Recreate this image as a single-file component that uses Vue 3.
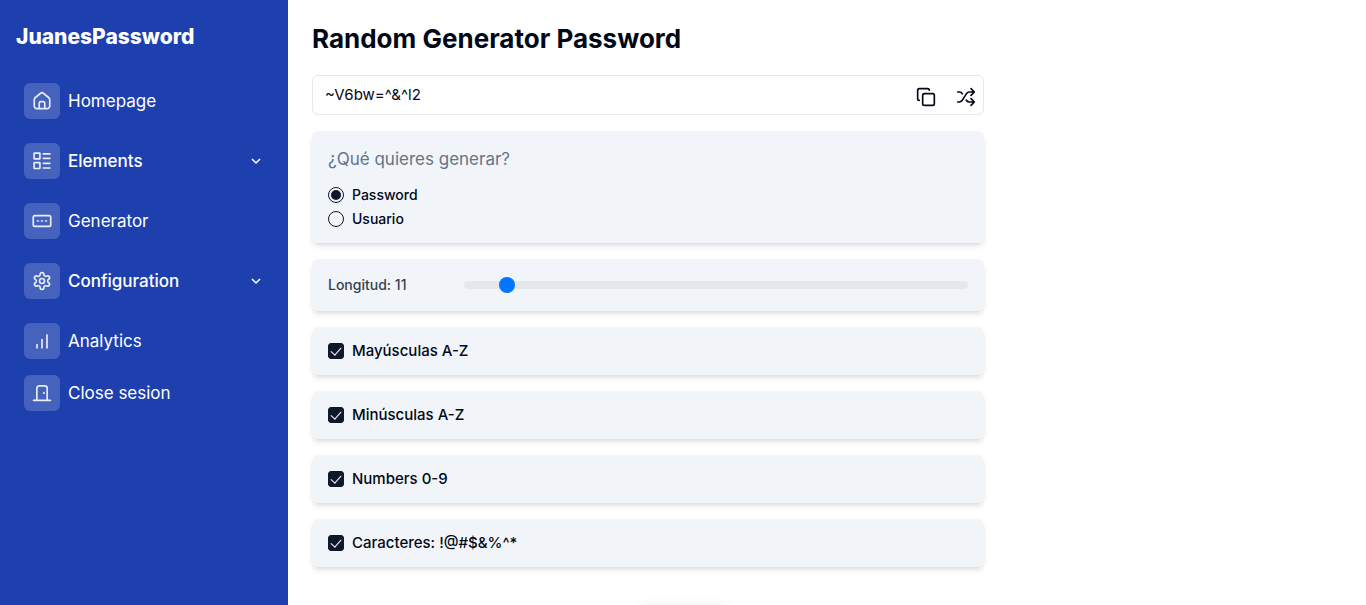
<script setup>
import { ref } from 'vue'

const password = ref('~V6bw=^&^l2')
const kind = ref('password')
const length = ref(11)

const links = [
  { label: 'Homepage', icon: 'home' },
  { label: 'Elements', icon: 'list', group: true },
  { label: 'Generator', icon: 'input' },
  { label: 'Configuration', icon: 'gear', group: true },
  { label: 'Analytics', icon: 'bars' },
  { label: 'Close sesion', icon: 'door', tight: true },
]

const options = ref([
  { id: 'upper', label: 'Mayúsculas A-Z', on: true },
  { id: 'lower', label: 'Minúsculas A-Z', on: true },
  { id: 'digits', label: 'Numbers 0-9', on: true },
  { id: 'symbols', label: 'Caracteres: !@#$&%^*', on: true },
])
</script>

<template>
  <div class="layout">
    <aside class="sidebar">
      <div class="brand">JuanesPassword</div>
      <nav class="nav">
        <component
          :is="link.group ? 'button' : 'a'"
          v-for="link in links"
          :key="link.label"
          :href="link.group ? undefined : '#'"
          :type="link.group ? 'button' : undefined"
          class="link"
          :class="{ group: link.group, tight: link.tight }"
        >
          <span class="tile">
            <svg class="icon" viewBox="0 0 24 24" aria-hidden="true">
              <template v-if="link.icon === 'home'">
                <path d="M10.4 2.7 4.1 7.8a3.7 3.7 0 0 0-1.4 2.9V18A3.2 3.2 0 0 0 6 21.2h12a3.2 3.2 0 0 0 3.3-3.2v-7.3a3.7 3.7 0 0 0-1.4-2.9L13.6 2.7a2.6 2.6 0 0 0-3.2 0z" />
                <path d="M8.7 21v-6.4a1.8 1.8 0 0 1 1.8-1.800h3a1.800 1.800 0 0 1 1.800 1.800V21" />
              </template>
              <template v-else-if="link.icon === 'list'">
                <rect x="2.500" y="2.500" width="7" height="7" rx="0.500" />
                <rect x="2.500" y="14" width="7" height="7" rx="0.500" />
                <path d="M13.500 3.500h8M13.500 8.800h8M13.500 14.800h8M13.500 20.400h8" />
              </template>
              <template v-else-if="link.icon === 'input'">
                <rect x="1.500" y="5.500" width="21" height="13" rx="2" />
                <path d="M6.600 12h1M11.500 12h1M16.400 12h1" />
              </template>
              <template v-else-if="link.icon === 'gear'">
                <path d="M12.220 2h-.44a2 2 0 0 0-2 2v.18a2 2 0 0 1-1 1.730l-.43.25a2 2 0 0 1-2 0l-.15-.08a2 2 0 0 0-2.730.73l-.22.38a2 2 0 0 0 .73 2.730l.15.1a2 2 0 0 1 1 1.720v.51a2 2 0 0 1-1 1.740l-.15.09a2 2 0 0 0-.73 2.730l.22.38a2 2 0 0 0 2.730.73l.15-.08a2 2 0 0 1 2 0l.43.25a2 2 0 0 1 1 1.730V20a2 2 0 0 0 2 2h.44a2 2 0 0 0 2-2v-.18a2 2 0 0 1 1-1.730l.43-.25a2 2 0 0 1 2 0l.15.08a2 2 0 0 0 2.730-.73l.22-.39a2 2 0 0 0-.73-2.730l-.15-.08a2 2 0 0 1-1-1.740v-.5a2 2 0 0 1 1-1.740l.15-.09a2 2 0 0 0 .73-2.730l-.22-.38a2 2 0 0 0-2.730-.73l-.15.08a2 2 0 0 1-2 0l-.43-.25a2 2 0 0 1-1-1.730V4a2 2 0 0 0-2-2z" />
                <circle cx="12" cy="12" r="3" />
              </template>
              <template v-else-if="link.icon === 'bars'">
                <path class="thick" d="M6 15.500V21M12 9.500V21M18 4v17" />
              </template>
              <template v-else>
                <path d="M1.800 20.800h20.400M5.800 20.800V6.500a3 3 0 0 1 3-3h6.400a3 3 0 0 1 3 3v14.300M14.300 11.600v1" />
              </template>
            </svg>
          </span>
          <span class="text">{{ link.label }}</span>
          <svg v-if="link.group" class="chevron" viewBox="0 0 16 16" aria-hidden="true">
            <path d="m4 6 4 4 4-4" />
          </svg>
        </component>
      </nav>
    </aside>

    <main class="main">
      <form class="panel" @submit.prevent>
        <h1 class="title">Random Generator Password</h1>

        <div class="output">
          <input v-model="password" class="value" type="text" aria-label="Password generado" />
          <button type="button" class="action" aria-label="Copiar">
            <svg class="glyph" viewBox="0 0 24 24" aria-hidden="true">
              <rect x="8" y="8" width="14" height="14" rx="2" />
              <path d="M4 16c-1.100 0-2-.9-2-2V4c0-1.100.9-2 2-2h10c1.100 0 2 .9 2 2" />
            </svg>
          </button>
          <button type="button" class="action" aria-label="Generar de nuevo">
            <svg class="glyph" viewBox="0 0 24 24" aria-hidden="true">
              <path d="m18 14 4 4-4 4M18 2l4 4-4 4M2 18h1.973a4 4 0 0 0 3.300-1.700l5.454-8.600a4 4 0 0 1 3.300-1.700H22M2 6h1.972a4 4 0 0 1 3.600 2.200M22 18h-6.041a4 4 0 0 1-3.300-1.800l-.359-.45" />
            </svg>
          </button>
        </div>

        <fieldset class="card kinds">
          <div class="question">¿Qué quieres generar?</div>
          <label class="choice small">
            <input v-model="kind" class="radio" type="radio" name="kind" value="password" />
            <span>Password</span>
          </label>
          <label class="choice small">
            <input v-model="kind" class="radio" type="radio" name="kind" value="user" />
            <span>Usuario</span>
          </label>
        </fieldset>

        <div class="card range">
          <label class="range-label small" for="length">Longitud: {{ length }}</label>
          <input id="length" v-model="length" class="slider" type="range" min="4" max="102" />
        </div>

        <div v-for="option in options" :key="option.id" class="card">
          <label class="choice">
            <input v-model="option.on" class="check" type="checkbox" />
            <span>{{ option.label }}</span>
          </label>
        </div>
      </form>
    </main>

    <div class="dock" aria-hidden="true"></div>
  </div>
</template>

<style>
body {
  background: #fff;
}
</style>

<style scoped>
.layout,
.layout * {
  box-sizing: border-box;
}
.layout {
  display: flex;
  min-height: 100vh;
  color: #020817;
  font-family: Inter, "Open Sans", sans-serif;
  font-size: 15px;
  line-height: 24px;
}
.sidebar {
  flex: 0 0 288px;
  padding: 23px 16px;
  background: #1e40af;
  color: #fff;
}
.brand {
  font-size: 21px;
  font-weight: 800;
  line-height: 28px;
}
.nav {
  display: flex;
  flex-direction: column;
  gap: 24px;
  padding: 32px 8px;
}
.link {
  display: flex;
  align-items: center;
  gap: 8px;
  width: 100%;
  padding: 0;
  border: 0;
  background: none;
  color: inherit;
  font: inherit;
  font-size: 17px;
  text-align: left;
  text-decoration: none;
}
.link.group {
  font-weight: 500;
}
.tight {
  margin-top: -8px;
}
.tile {
  display: grid;
  place-items: center;
  width: 36px;
  height: 36px;
  border-radius: 6px;
  background: #4562bd;
}
.text {
  flex: 1;
}
.icon,
.glyph {
  display: block;
  width: 20px;
  height: 20px;
  fill: none;
  stroke: currentColor;
  stroke-width: 2;
  stroke-linecap: round;
  stroke-linejoin: round;
}
.icon {
  color: #e9edf8;
}
.thick {
  stroke-width: 2;
  stroke-linecap: butt;
}
.chevron {
  width: 16px;
  height: 16px;
  fill: none;
  stroke: currentColor;
  stroke-width: 1.5;
}
.main {
  flex: 1;
  min-width: 0;
  padding: 23px 24px;
}
.panel {
  display: flex;
  flex-direction: column;
  gap: 16px;
  max-width: 672px;
}
.title {
  margin: 0 0 4px;
  font-size: 26px;
  font-weight: 700;
  line-height: 32px;
}
.output {
  display: flex;
  align-items: center;
  gap: 20px;
  height: 40px;
  padding: 0 7px 0 12px;
  border: 1px solid #e2e8f0;
  border-radius: 6px;
}
.value {
  flex: 1;
  min-width: 0;
  padding: 0;
  border: 0;
  outline: 0;
  background: none;
  color: inherit;
  font: inherit;
}
.action {
  padding: 4px 0 0;
  border: 0;
  background: none;
  color: inherit;
}
.card {
  min-width: 0;
  margin: 0;
  padding: 12px 16px;
  border: 0;
  border-radius: 6px;
  background: #f1f5f9;
  box-shadow: 0 4px 6px -1px rgb(0 0 0 / 0.1), 0 2px 4px -2px rgb(0 0 0 / 0.1);
}
.kinds {
  padding: 16px 16px 12px;
}
.question {
  margin-bottom: 12px;
  color: #64748b;
  font-size: 17px;
}
.choice {
  display: flex;
  align-items: center;
  gap: 8px;
  font-weight: 500;
}
.small {
  font-size: 14px;
}
.radio,
.check {
  appearance: none;
  width: 16px;
  height: 16px;
  margin: 0;
  border: 1px solid #0f172a;
}
.radio {
  display: grid;
  place-items: center;
  border-radius: 50%;
}
.radio:checked::before {
  content: "";
  width: 10px;
  height: 10px;
  border-radius: 50%;
  background: #0f172a;
}
.check {
  display: grid;
  justify-items: center;
  border-radius: 3px;
}
.check:checked {
  background: #0f172a;
}
.check:checked::before {
  content: "";
  width: 5px;
  height: 9px;
  margin-top: 1px;
  border: solid #f8fafc;
  border-width: 0 1px 1px 0;
  transform: rotate(42deg);
}
.range {
  display: flex;
  align-items: center;
  gap: 16px;
  padding: 14px 16px;
}
.range-label {
  flex: 0 0 120px;
  color: #374151;
  font-weight: 500;
}
.slider {
  flex: 1;
  appearance: none;
  min-width: 0;
  height: 8px;
  margin: 0;
  border-radius: 4px;
  background: #e5e7eb;
}
.slider::-webkit-slider-thumb {
  appearance: none;
  width: 16px;
  height: 16px;
  border-radius: 50%;
  background: #0075ff;
}
.dock {
  position: fixed;
  bottom: -18px;
  left: 50%;
  width: 88px;
  height: 16px;
  margin-left: -44px;
  border-radius: 8px;
  box-shadow: 0 0 12px rgb(0 0 0 / 0.1);
}
</style>
